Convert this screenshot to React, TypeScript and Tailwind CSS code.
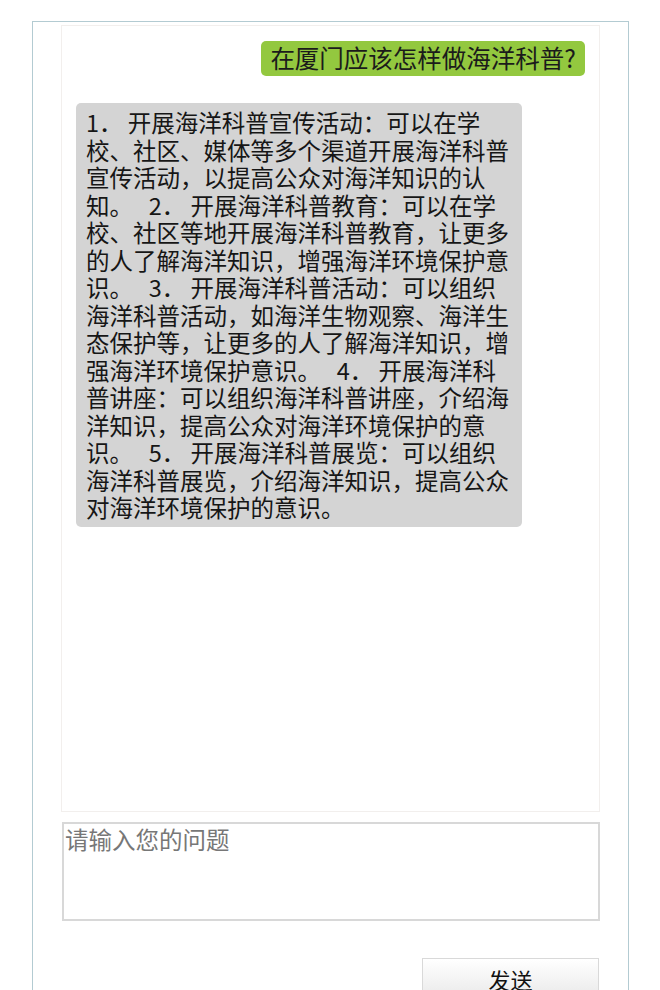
const answerLines = [
  "1．\u00a0开展海洋科普宣传活动：可以在学",
  "校、社区、媒体等多个渠道开展海洋科普",
  "宣传活动，以提高公众对海洋知识的认",
  "知。\u00a0\u00a0\u00a02．\u00a0开展海洋科普教育：可以在学",
  "校、社区等地开展海洋科普教育，让更多",
  "的人了解海洋知识，增强海洋环境保护意",
  "识。\u00a0\u00a0\u00a03．\u00a0开展海洋科普活动：可以组织",
  "海洋科普活动，如海洋生物观察、海洋生",
  "态保护等，让更多的人了解海洋知识，增",
  "强海洋环境保护意识。\u00a0\u00a0\u00a04．\u00a0开展海洋科",
  "普讲座：可以组织海洋科普讲座，介绍海",
  "洋知识，提高公众对海洋环境保护的意",
  "识。\u00a0\u00a0\u00a05．\u00a0开展海洋科普展览：可以组织",
  "海洋科普展览，介绍海洋知识，提高公众",
  "对海洋环境保护的意识。",
]

const font = { fontFamily: '"Noto Sans CJK SC", "Noto Sans", sans-serif' }

export default function App() {
  return (
    <div className="h-[990px] overflow-hidden bg-white pt-[21px]" style={font}>
      <div className="ml-[32px] h-full w-[597px] border border-b-0 border-[#b3cbd2]">
        {/* chat history */}
        <div className="ml-[28px] mt-[3px] flex h-[787px] w-[539px] flex-col border border-[#f2efed]">
          <div className="mr-[14px] mt-[15px] flex justify-end">
            <div className="flex h-[35px] items-center rounded-[5px] bg-[#93c83f] px-[9px] text-[24.5px] leading-none text-[#1b1b1b]">
              在厦门应该怎样做海洋科普?
            </div>
          </div>
          <div className="ml-[14px] mt-[27px] w-[446px] rounded-[5px] bg-[#d4d4d4] pb-[5px] pl-[10px] pr-[12px] pt-[6px] text-[23.5px] leading-[27.5px] text-[#161616]">
            {answerLines.map((line, i) => (
              <div key={i} className="h-[27.5px] whitespace-nowrap">
                {line}
              </div>
            ))}
          </div>
        </div>

        {/* input */}
        <textarea
          placeholder="请输入您的问题"
          className="ml-[29px] mt-[10px] block h-[99px] w-[538px] resize-none border-2 border-[#d8d8d8] px-[1px] py-0 text-[23.5px] leading-[30px] outline-none placeholder:text-[#777777]"
          style={font}
        />

        <div className="mr-[29px] mt-[37px] flex justify-end">
          <button className="h-[42px] w-[177px] border border-[#d9d9d9] bg-gradient-to-b from-white to-[#e9e9e9] text-[22px] text-[#111111]">
            发送
          </button>
        </div>
      </div>
    </div>
  )
}
